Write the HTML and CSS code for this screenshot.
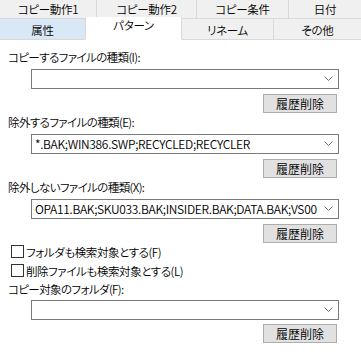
FILE: index.html
```html
<!DOCTYPE html>
<html lang="ja">
<head>
<meta charset="utf-8">
<link rel="stylesheet" href="styles.css">
</head>
<body>
<div class="dialog">
  <div class="tabs">
    <div class="tabrow back">
      <div class="tab t1">コピー動作1</div>
      <div class="tab t2">コピー動作2</div>
      <div class="tab t3">コピー条件</div>
      <div class="tab t4">日付</div>
    </div>
    <div class="tabrow front">
      <div class="tab u1 hover">属性</div>
      <div class="tab u2 sel">パターン</div>
      <div class="tab u3">リネーム</div>
      <div class="tab u4">その他</div>
    </div>
  </div>
  <div class="panel">
    <div class="group">
      <div class="label">コピーするファイルの種類(I):</div>
      <div class="combo"><span class="value"></span><svg class="chev" width="9" height="6" viewBox="0 0 9 6"><path d="M0.5 0.5 L4.5 4.5 L8.5 0.5" fill="none" stroke="#707070" stroke-width="1"/></svg></div>
      <div class="btnrow"><div class="btn">履歴削除</div></div>
    </div>
    <div class="group">
      <div class="label">除外するファイルの種類(E):</div>
      <div class="combo"><span class="value">*.BAK;WIN386.SWP;RECYCLED;RECYCLER</span><svg class="chev" width="9" height="6" viewBox="0 0 9 6"><path d="M0.5 0.5 L4.5 4.5 L8.5 0.5" fill="none" stroke="#707070" stroke-width="1"/></svg></div>
      <div class="btnrow"><div class="btn">履歴削除</div></div>
    </div>
    <div class="group">
      <div class="label">除外しないファイルの種類(X):</div>
      <div class="combo"><span class="value">OPA11.BAK;SKU033.BAK;INSIDER.BAK;DATA.BAK;VS00</span><svg class="chev" width="9" height="6" viewBox="0 0 9 6"><path d="M0.5 0.5 L4.5 4.5 L8.5 0.5" fill="none" stroke="#707070" stroke-width="1"/></svg></div>
      <div class="btnrow"><div class="btn">履歴削除</div></div>
    </div>
    <div class="checks">
      <div class="check"><span class="box"></span><span>フォルダも検索対象とする(F)</span></div>
      <div class="check"><span class="box"></span><span>削除ファイルも検索対象とする(L)</span></div>
    </div>
    <div class="group last">
      <div class="label">コピー対象のフォルダ(F):</div>
      <div class="combo"><span class="value"></span><svg class="chev" width="9" height="6" viewBox="0 0 9 6"><path d="M0.5 0.5 L4.5 4.5 L8.5 0.5" fill="none" stroke="#707070" stroke-width="1"/></svg></div>
      <div class="btnrow"><div class="btn">履歴削除</div></div>
    </div>
  </div>
</div>
</body>
</html>
```
FILE: styles.css
```css
html, body {
  margin: 0;
  padding: 0;
  background: #ffffff;
}
body {
  font-family: "Noto Sans CJK JP DemiLight", "Noto Sans CJK JP", "Noto Sans", sans-serif;
  font-weight: 350;
  font-size: 12px;
  font-feature-settings: "palt" 1;
  color: #000;
  width: 361px;
  height: 356px;
  overflow: hidden;
}
.dialog {
  width: 361px;
}
.tabs {
  background: #ffffff;
}
.tabrow {
  display: flex;
}
.tab {
  box-sizing: border-box;
  background: #f0f0f0;
  border-right: 1px solid #d9d9d9;
  border-bottom: 1px solid #d9d9d9;
  text-align: center;
  white-space: nowrap;
  font-size: 11.5px;
  letter-spacing: -0.3px;
}
.tab:last-child {
  border-right: none;
}
.back .tab {
  height: 19px;
  line-height: 18px;
}
.t1 { width: 97px; }
.t2 { width: 100px; }
.t3 { width: 92px; }
.t4 { flex: 1; }
.front {
  height: 21px;
}
.front .tab {
  height: 21px;
  line-height: 22px;
}
.u1 { width: 86px; }
.u2 { width: 96px; }
.u3 { width: 92px; }
.u4 { flex: 1; }
.tab.hover {
  background: #d9e8f6;
}
.tab.sel {
  background: #ffffff;
  border-bottom-color: #ffffff;
  border-right: 1px solid #d9d9d9;
  border-left: 1px solid #d9d9d9;
  margin-left: -1px;
  width: 97px;
  height: 23px;
  margin-top: -2px;
  line-height: 16px;
  position: relative;
}
.panel {
  padding-top: 9px;
}
.group {
  margin-bottom: 1px;
}
.label {
  height: 16px;
  line-height: 16px;
  padding-left: 8px;
  white-space: nowrap;
  font-size: 11.5px;
  letter-spacing: -0.6px;
}
.combo {
  box-sizing: border-box;
  margin-top: 4px;
  margin-left: 31px;
  width: 308px;
  height: 20px;
  border: 1px solid #7a7a7a;
  background: #fff;
  display: flex;
  align-items: center;
  padding-left: 3px;
  padding-right: 5px;
}
.value {
  flex: 1;
  overflow: hidden;
  white-space: nowrap;
  line-height: 18px;
  letter-spacing: -0.32px;
}
.chev {
  flex: none;
  margin-left: 2px;
}
.btnrow {
  display: flex;
  justify-content: flex-end;
  padding-right: 24px;
  margin-top: 5px;
}
.btn {
  box-sizing: border-box;
  width: 74px;
  height: 19px;
  line-height: 17px;
  background: #e1e1e1;
  border: 1px solid #adadad;
  text-align: center;
}
.checks {
  margin-top: -2px;
}
.check {
  display: flex;
  align-items: center;
  height: 19px;
  padding-left: 11px;
  white-space: nowrap;
  font-size: 11.5px;
  letter-spacing: -0.4px;
}
.check .box {
  box-sizing: border-box;
  width: 13px;
  height: 13px;
  border: 1px solid #333333;
  background: #fff;
  margin-right: 2px;
  flex: none;
}
.last .label {
  margin-top: 1px;
}
.last .combo {
  margin-top: 3px;
}
.last .btnrow {
  margin-top: 4px;
}
```
